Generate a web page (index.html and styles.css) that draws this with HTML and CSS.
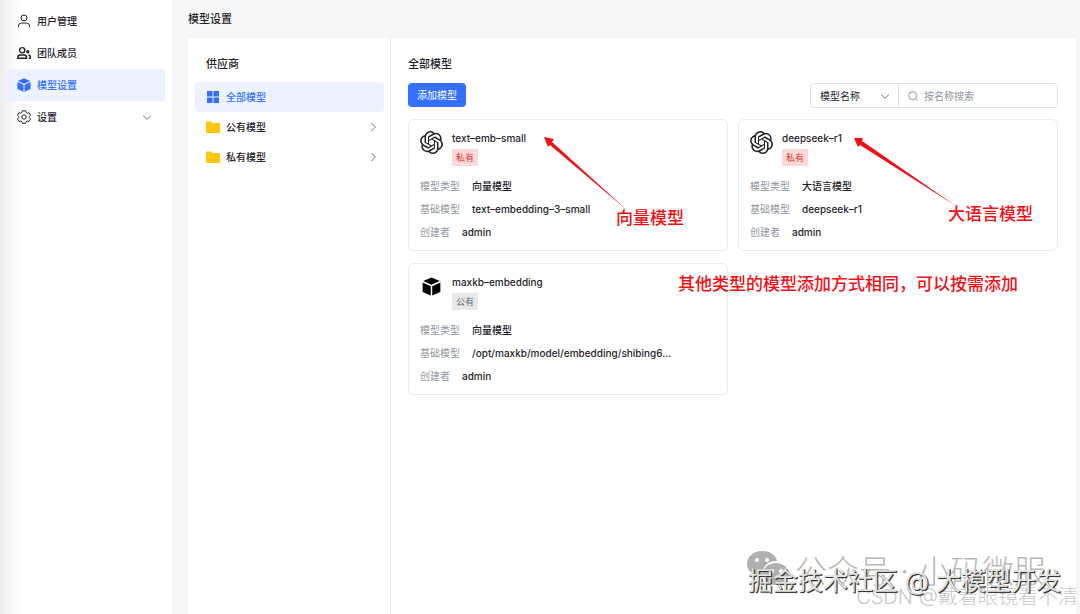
FILE: index.html
```
<!DOCTYPE html>
<html lang="zh-CN">
<head>
    <meta charset="UTF-8">
    <title>模型设置</title>
    <link rel="stylesheet" href="styles.css">
</head>
<body>
    <!-- shared icons -->
    <svg class="sprite" aria-hidden="true">
        <symbol id="icon-openai" viewBox="0 0 24 24"><path d="M22.2819 9.8211a5.9847 5.9847 0 0 0-.5157-4.9108 6.0462 6.0462 0 0 0-6.5098-2.9A6.0651 6.0651 0 0 0 4.9807 4.1818a5.9847 5.9847 0 0 0-3.9977 2.9 6.0462 6.0462 0 0 0 .7427 7.0966 5.98 5.98 0 0 0 .511 4.9107 6.051 6.051 0 0 0 6.5146 2.9001A5.9847 5.9847 0 0 0 13.2599 24a6.0557 6.0557 0 0 0 5.7718-4.2058 5.9894 5.9894 0 0 0 3.9977-2.9001 6.0557 6.0557 0 0 0-.7475-7.0729zm-9.022 12.6081a4.4755 4.4755 0 0 1-2.8764-1.0408l.1419-.0804 4.7783-2.7582a.7948.7948 0 0 0 .3927-.6813v-6.7369l2.02 1.1686a.071.071 0 0 1 .038.052v5.5826a4.504 4.504 0 0 1-4.4945 4.4944zm-9.6607-4.1254a4.4708 4.4708 0 0 1-.5346-3.0137l.142.0852 4.783 2.7582a.7712.7712 0 0 0 .7806 0l5.8428-3.3685v2.3324a.0804.0804 0 0 1-.0332.0615L9.74 19.9502a4.4992 4.4992 0 0 1-6.1408-1.6464zM2.3408 7.8956a4.485 4.485 0 0 1 2.3655-1.9728V11.6a.7664.7664 0 0 0 .3879.6765l5.8144 3.3543-2.0201 1.1685a.0757.0757 0 0 1-.071 0l-4.8303-2.7865A4.504 4.504 0 0 1 2.3408 7.872zm16.5963 3.8558L13.1038 8.364 15.1192 7.2a.0757.0757 0 0 1 .071 0l4.8303 2.7913a4.4944 4.4944 0 0 1-.6765 8.1042v-5.6772a.79.79 0 0 0-.407-.667zm2.0107-3.0231l-.142-.0852-4.7735-2.7818a.7759.7759 0 0 0-.7854 0L9.409 9.2297V6.8974a.0662.0662 0 0 1 .0284-.0615l4.8303-2.7866a4.4992 4.4992 0 0 1 6.6802 4.66zM8.3065 12.863l-2.02-1.1638a.0804.0804 0 0 1-.038-.0567V6.0742a4.4992 4.4992 0 0 1 7.3757-3.4537l-.142.0805L8.704 5.459a.7948.7948 0 0 0-.3927.6813zm1.0976-2.3654l2.602-1.4998 2.6069 1.4998v2.9994l-2.5974 1.4997-2.6067-1.4997Z"/></symbol>
        <symbol id="icon-cube" viewBox="0 0 24 24"><path d="M12 .5l10.500 4.500L12 9.800 1.500 5zM.8 7l10.300 4.700V23.500L.8 18.800zM23.200 7l-10.300 4.700v11.800l10.300-4.700z"/></symbol>
        <symbol id="icon-folder" viewBox="0 0 14 12"><path d="M0 1.500Q0 .5 1 .5h4l1.200 1.500H13q1 0 1 1V11q0 1-1 1H1q-1 0-1-1z"/></symbol>
        <symbol id="icon-right" viewBox="0 0 10 10"><path d="M3 0l5 5-5 5"/></symbol>
        <symbol id="icon-down" viewBox="0 0 10 10"><path d="M0 3l5 5 5-5"/></symbol>
    </svg>

    <div class="layout">
        <nav class="sidebar">
            <a class="menu-item" href="#">
                <svg class="icon line" viewBox="0 0 14 14"><circle cx="7" cy="4" r="3"/><path d="M1.500 13v-1q0-3 3-3h5q3 0 3 3v1"/></svg>
                <span>用户管理</span>
            </a>
            <a class="menu-item" href="#">
                <svg class="icon line bold" viewBox="0 0 14 14"><circle cx="5.200" cy="4.200" r="2.600"/><path d="M.8 12.300v-1q0-2.300 2.300-2.300h4.200q2.300 0 2.300 2.300v1z"/><circle cx="10.800" cy="5.800" r="1"/><path d="M11.300 8.900q2 .2 2 2.100v1.300h-1.300"/></svg>
                <span>团队成员</span>
            </a>
            <a class="menu-item active" href="#">
                <svg class="icon"><use href="#icon-cube"/></svg>
                <span>模型设置</span>
            </a>
            <a class="menu-item" href="#">
                <svg class="icon line gear" viewBox="0 0 14 14"><path d="M5.500 .8h3l.6 1.700 1.200.7 1.800-.4 1.400 2.500-1.100 1.300v1l1.100 1.300-1.400 2.500-1.800-.4-1.200.7-.6 1.700h-3l-.6-1.700-1.200-.7-1.800.4L.5 8.900l1.100-1.300v-1L.5 5.300l1.400-2.500 1.800.4 1.200-.7z"/><circle cx="7" cy="7" r="2.200"/></svg>
                <span>设置</span>
                <svg class="arrow"><use href="#icon-down"/></svg>
            </a>
        </nav>

        <main class="main">
            <h1 class="page-title">模型设置</h1>
            <div class="panel">
                <aside class="provider">
                    <h2 class="title">供应商</h2>
                    <a class="provider-item active" href="#">
                        <svg class="icon" viewBox="0 0 14 14"><path d="M1 1h5.500v5.500H1zM7.500 1H13v5.500H7.500zM1 7.500h5.500V13H1zM7.500 7.500H13V13H7.500z"/></svg>
                        <span>全部模型</span>
                    </a>
                    <a class="provider-item" href="#">
                        <svg class="icon folder"><use href="#icon-folder"/></svg>
                        <span>公有模型</span>
                        <svg class="arrow"><use href="#icon-right"/></svg>
                    </a>
                    <a class="provider-item" href="#">
                        <svg class="icon folder"><use href="#icon-folder"/></svg>
                        <span>私有模型</span>
                        <svg class="arrow"><use href="#icon-right"/></svg>
                    </a>
                </aside>

                <section class="models">
                    <h2 class="title">全部模型</h2>
                    <div class="toolbar">
                        <button class="add-btn" type="button">添加模型</button>
                        <div class="search">
                            <div class="search-type">
                                <select aria-label="搜索类型"><option>模型名称</option></select>
                                <svg class="arrow"><use href="#icon-down"/></svg>
                            </div>
                            <label class="search-box">
                                <svg class="search-icon" viewBox="0 0 10 10"><circle cx="4.700" cy="4.700" r="4"/><path d="M7.500 7.500l2 2"/></svg>
                                <input type="text" placeholder="按名称搜索" aria-label="按名称搜索">
                            </label>
                        </div>
                    </div>

                    <div class="cards">
                        <article class="card">
                            <header class="card-head">
                                <svg class="logo"><use href="#icon-openai"/></svg>
                                <div>
                                    <h3 class="name">text–emb–small</h3>
                                    <span class="tag private">私有</span>
                                </div>
                            </header>
                            <dl class="info">
                                <div><dt>模型类型</dt><dd>向量模型</dd></div>
                                <div><dt>基础模型</dt><dd>text–embedding–3–small</dd></div>
                                <div><dt>创建者</dt><dd>admin</dd></div>
                            </dl>
                            <div class="note note-vector">
                                <svg viewBox="0 0 84 74"><path d="M0 0l10 2-2 3 76 69L6 8 4 10z"/></svg>
                                <span>向量模型</span>
                            </div>
                        </article>
                        <article class="card">
                            <header class="card-head">
                                <svg class="logo"><use href="#icon-openai"/></svg>
                                <div>
                                    <h3 class="name">deepseek–r1</h3>
                                    <span class="tag private">私有</span>
                                </div>
                            </header>
                            <dl class="info">
                                <div><dt>模型类型</dt><dd>大语言模型</dd></div>
                                <div><dt>基础模型</dt><dd>deepseek–r1</dd></div>
                                <div><dt>创建者</dt><dd>admin</dd></div>
                            </dl>
                            <div class="note note-llm">
                                <svg viewBox="0 0 102 68"><path d="M0 0l9 0-1 3 94 65L6 7 4 9z"/></svg>
                                <span>大语言模型</span>
                            </div>
                        </article>
                        <article class="card">
                            <header class="card-head">
                                <svg class="logo cube"><use href="#icon-cube"/></svg>
                                <div>
                                    <h3 class="name">maxkb–embedding</h3>
                                    <span class="tag">公有</span>
                                </div>
                            </header>
                            <dl class="info">
                                <div><dt>模型类型</dt><dd>向量模型</dd></div>
                                <div><dt>基础模型</dt><dd>/opt/maxkb/model/embedding/shibing6...</dd></div>
                                <div><dt>创建者</dt><dd>admin</dd></div>
                            </dl>
                            <div class="note note-other">其他类型的模型添加方式相同，可以按需添加</div>
                        </article>
                    </div>
                </section>
            </div>
        </main>
    </div>

    <div class="watermark wechat">
        <svg viewBox="0 0 42 36"><path d="M15 0C6 0 0 6 0 13c0 4 2 7 5 9l-1 5 5-3c3 1 5 1 7 1-2-9 5-15 14-15C29 4 23 0 15 0z"/><path d="M29 12c-8 0-13 5-13 11s6 11 13 11l5-1 5 3-1-5c2-2 4-5 4-8 0-6-6-11-13-11z"/><g fill="#fff"><circle cx="10" cy="9" r="2"/><circle cx="20" cy="9" r="2"/><circle cx="25" cy="20" r="2"/><circle cx="34" cy="20" r="2"/></g></svg>
        <span>公众号 · 小码微服</span>
    </div>
    <div class="watermark csdn">CSDN @戴着眼镜看不清</div>
    <div class="watermark juejin">掘金技术社区 @ 大模型开发</div>
</body>
</html>
```
FILE: styles.css
```
* {
    box-sizing: border-box;
}

body {
    margin: 0;
    background: #f5f6f7;
    color: #1f2329;
    font-family: Inter, "Noto Sans CJK SC", sans-serif;
    font-size: 10px;
    line-height: 16px;
    overflow: hidden;
}

h1, h2, h3, dl, dd {
    margin: 0;
}

a {
    color: inherit;
    text-decoration: none;
}

.sprite {
    position: absolute;
    width: 0;
    height: 0;
}

.layout {
    display: flex;
    min-height: 100vh;
}

/* left menu */
.sidebar {
    flex: none;
    width: 172px;
    padding: 5px 7px 0 5px;
    background: linear-gradient(to right, #ececec, #fff 20px);
}

.menu-item {
    display: flex;
    align-items: center;
    gap: 6px;
    height: 32px;
    padding: 0 14px 0 12px;
    border-radius: 3px;
    font-weight: 500;
}

.menu-item.active,
.provider-item.active {
    background: #ecf2ff;
    color: #3370ff;
}

.icon {
    flex: none;
    width: 14px;
    height: 14px;
    fill: currentColor;
}

.line {
    fill: none;
    stroke: currentColor;
    stroke-width: 1;
}

.bold {
    stroke-width: 1.4;
}

.folder {
    height: 12px;
    fill: #ffc60a;
}

.arrow {
    flex: none;
    width: 8px;
    height: 8px;
    margin-left: auto;
    fill: none;
    stroke: #646a73;
    stroke-width: 1.2;
}

/* content */
.main {
    flex: 1;
    display: flex;
    flex-direction: column;
    padding: 0 4px 0 16px;
}

.page-title {
    height: 38px;
    font-size: 11px;
    font-weight: 500;
    line-height: 38px;
}

.panel {
    flex: 1;
    display: flex;
    background: #fff;
}

.title {
    font-size: 11px;
    font-weight: 500;
    line-height: 18px;
}

.provider {
    flex: none;
    width: 203px;
    padding: 17px 6px 0 7px;
    border-right: 1px solid #e8eaec;
}

.provider .title {
    padding: 0 11px;
    margin-bottom: 9px;
}

.provider-item {
    display: flex;
    align-items: center;
    gap: 6px;
    height: 30px;
    padding: 0 7px 0 11px;
    border-radius: 4px;
    font-weight: 500;
}

.models {
    flex: 1;
    padding: 17px 18px 0 17px;
}

.toolbar {
    display: flex;
    justify-content: space-between;
    margin: 10px 0 11px;
}

.add-btn {
    height: 24px;
    padding: 0 9px;
    border: 0;
    border-radius: 4px;
    background: #3370ff;
    color: #fff;
    font: inherit;
}

.search {
    display: flex;
    width: 248px;
    height: 25px;
    border: 1px solid #dee0e3;
    border-radius: 4px;
}

.search-type {
    flex: none;
    display: flex;
    align-items: center;
    width: 88px;
    padding-right: 9px;
    border-right: 1px solid #dee0e3;
}

.search select {
    flex: 1;
    min-width: 0;
    padding: 0 0 0 9px;
    border: 0;
    background: none;
    color: inherit;
    font: inherit;
    appearance: none;
}

.search-box {
    flex: 1;
    display: flex;
    align-items: center;
    gap: 6px;
    padding: 0 9px;
}

.search-icon {
    flex: none;
    width: 10px;
    height: 10px;
    fill: none;
    stroke: #8f959e;
}

.search input {
    flex: 1;
    min-width: 0;
    padding: 0;
    border: 0;
    outline: 0;
    background: none;
    font: inherit;
}

.search input::placeholder {
    color: #8f959e;
}

.cards {
    display: grid;
    grid-template-columns: 1fr 1fr;
    gap: 12px 10px;
}

.card {
    position: relative;
    min-width: 0;
    padding: 9px 11px 6px;
    border: 1px solid #e8eaec;
    border-radius: 6px;
}

.card-head {
    display: flex;
    gap: 9px;
    margin-bottom: 9px;
}

.logo {
    width: 23px;
    height: 23px;
    margin-top: 2px;
    fill: #1f2329;
}

.cube {
    padding: 2px;
    fill: #000;
}

.name {
    font-size: 10px;
    font-weight: 500;
    line-height: 18px;
}

.tag {
    display: block;
    width: 26px;
    margin-top: 2px;
    background: #e6e8e9;
    color: #646a73;
    font-size: 9px;
    line-height: 17px;
    text-align: center;
}

.private {
    background: #fdd8d8;
    color: #d83931;
}

.info div {
    display: flex;
    gap: 12px;
    line-height: 23px;
}

.info dt {
    color: #8f959e;
}

.info dd {
    font-weight: 500;
}

/* red notes drawn over the cards */
.note {
    position: absolute;
    color: #f00f14;
    font-size: 17px;
    font-weight: 500;
    line-height: 24px;
    white-space: nowrap;
}

.note svg {
    display: block;
    fill: #f00f14;
}

.note-vector {
    top: 17px;
    left: 135px;
}

.note-vector svg {
    width: 84px;
    height: 74px;
}

.note-vector span {
    display: block;
    margin: -5px 0 0 72px;
}

.note-llm {
    top: 18px;
    left: 115px;
}

.note-llm svg {
    width: 102px;
    height: 68px;
}

.note-llm span {
    display: block;
    margin: -4px 0 0 94px;
}

.note-other {
    top: 8px;
    left: 269px;
}

/* watermarks in the corner */
.watermark {
    position: absolute;
    white-space: nowrap;
}

.wechat {
    right: 34px;
    bottom: 21px;
    display: flex;
    gap: 6px;
    color: #b8b8b8;
    font-size: 32px;
    font-weight: 300;
    line-height: 42px;
}

.wechat svg {
    width: 42px;
    height: 36px;
    fill: #b0b0b0;
}

.juejin {
    right: 19px;
    bottom: 15px;
    color: #e2e2e2;
    font-size: 25px;
    line-height: 36px;
    text-shadow: 1px 1px 0 #333, 1px 1px 1px #555;
}

.csdn {
    right: 2px;
    bottom: 3px;
    color: #c8c8c8;
    font-size: 20px;
    font-weight: 300;
    line-height: 28px;
}
```
